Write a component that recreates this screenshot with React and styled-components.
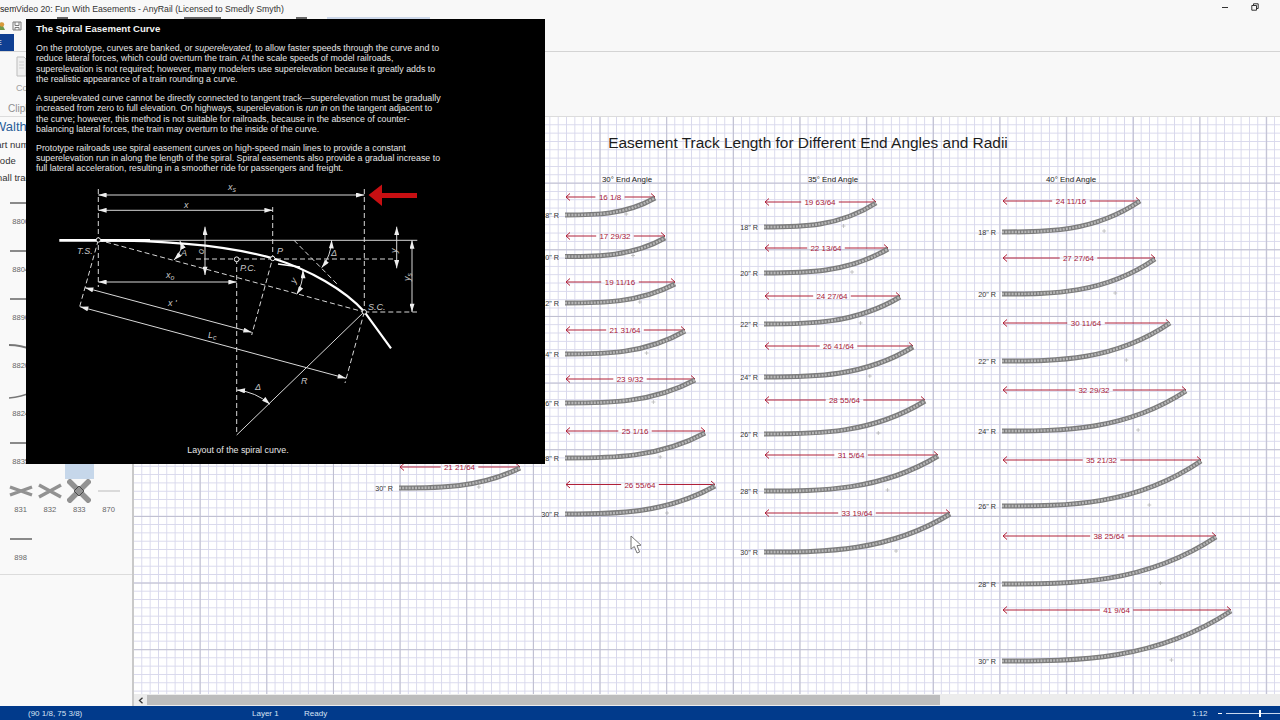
import React from "react";
import styled, { createGlobalStyle } from "styled-components";

const Global = createGlobalStyle`
  html, body { margin: 0; padding: 0; background: #f8f8f8; overflow: hidden; }
  body { font-family: "Liberation Sans", Arial, sans-serif; }
`;

const Page = styled.div`
  position: relative;
  width: 1280px;
  height: 720px;
  display: flex;
  flex-direction: column;
  overflow: hidden;
  background: #f8f8f8;
`;

/* ---------- title bar and ribbon ---------- */

const TitleBar = styled.div`
  height: 17px;
  display: flex;
  align-items: center;
  font-family: "Liberation Sans", Arial, sans-serif;
  font-size: 8.7px;
  color: #333;
  white-space: nowrap;
`;

const TabName = styled.span`
  width: 16px;
  overflow: hidden;
  color: #222;
`;

const WindowTitle = styled.span`
  flex: 1;
`;

const WindowButton = styled.svg`
  width: 8px;
  height: 8px;
  margin-right: ${p => p.$mr}px;
  margin-top: -3px;
`;

const QuickRow = styled.div`
  height: 17px;
  position: relative;
  display: flex;
  align-items: flex-start;
`;

const QuickIcon = styled.svg`
  width: 10px;
  height: 10px;
  margin: 4px 0 0 ${p => p.$ml}px;
  flex: none;
`;

const Hint = styled.div`
  height: ${p => (p.$light ? 3 : 2)}px;
  width: ${p => p.$w}px;
  margin-left: ${p => p.$ml}px;
  background: ${p => (p.$light ? "#ccd7e9" : "#666")};
  flex: none;
`;

const TabRow = styled.div`
  height: 18px;
  box-sizing: border-box;
  border-bottom: 1px solid #d4d4d4;
  display: flex;
`;

const FileTab = styled.div`
  width: 14px;
  height: 17px;
  background: #0f3f92;
  color: #fff;
  font-size: 8px;
  line-height: 17px;
  text-indent: -15px;
  overflow: hidden;
  white-space: nowrap;
`;

const RibbonBody = styled.div`
  height: 65px;
  box-sizing: border-box;
  border-bottom: 1px solid #dcdcdc;
  position: relative;
  display: flex;
  flex-direction: column;
  padding: 4px 0 0 16px;
  font-size: 9px;
  color: #a0a0a0;
  overflow: hidden;
`;

const CopyGlyph = styled.svg`
  width: 11px;
  height: 21px;
`;

const RibbonCaption = styled.div`
  margin-top: 6px;
  line-height: 11px;
`;

const GroupName = styled.div`
  margin: 9px 0 0 -8px;
  line-height: 12px;
  font-size: 10px;
  color: #8f8f8f;
`;

/* ---------- side panel ---------- */

const Body = styled.div`
  flex: 1;
  display: flex;
  min-height: 0;
`;

const Side = styled.aside`
  width: 132px;
  flex: none;
  box-sizing: content-box;
  border-right: 2px solid #c9c9c9;
  background: #f9f9f9;
  overflow: hidden;
  white-space: nowrap;
`;

const SideTitle = styled.div`
  height: 19px;
  line-height: 19px;
  font-size: 13px;
  color: #2c5f99;
  text-indent: -6px;
`;

const SideRow = styled.div`
  height: ${p => p.$h}px;
  line-height: ${p => p.$h}px;
  font-size: 9.5px;
  color: #333;
  text-indent: ${p => p.$indent}px;
`;

const Palette = styled.div`
  margin-top: 3px;
  height: 384px;
  box-sizing: border-box;
  border-bottom: 1px solid #dcdcdc;
  padding-left: 6px;
  display: grid;
  grid-template-columns: repeat(4, 29.3px);
  grid-auto-rows: 48px;
`;

const Cell = styled.div`
  display: flex;
  flex-direction: column;
  align-items: center;
  background: ${p => (p.$selected ? "#c6d7ea" : "transparent")};
`;

const CellGlyph = styled.svg`
  width: 24px;
  height: 24px;
  flex: none;
`;

const CellLabel = styled.span`
  font-size: 7.6px;
  line-height: 12px;
  margin-top: 1px;
  color: #666;
`;

/* ---------- drawing area ---------- */

const Work = styled.div`
  flex: 1;
  display: flex;
  flex-direction: column;
  min-width: 0;
`;

const Canvas = styled.div`
  flex: 1;
  min-height: 0;
  background-color: #fff;
  background-image:
    linear-gradient(to right, #bfbfd0 1px, transparent 1px),
    linear-gradient(to bottom, #bfbfd0 1px, transparent 1px),
    linear-gradient(to right, #d8d8ec 1px, transparent 1px),
    linear-gradient(to bottom, #d8d8ec 1px, transparent 1px);
  background-size: 66.67px 66.67px, 66.67px 66.67px, 8.333px 8.333px, 8.333px 8.333px;
  background-position: -1px -1px;
`;

const Sheet = styled.svg`
  display: block;
  width: 100%;
  height: 100%;
  font-family: "Liberation Sans", Arial, sans-serif;
`;

const SheetTitle = styled.text`
  font-size: 15.45px;
  fill: #1c1c1c;
  text-anchor: middle;
`;

const ColumnHead = styled.text`
  font-size: 7.9px;
  fill: #222;
  text-anchor: middle;
`;

const RadiusLabel = styled.text`
  font-size: 7.2px;
  fill: #333;
  text-anchor: end;
`;

const DimLabel = styled.text`
  font-size: 8px;
  fill: #a8203a;
  text-anchor: middle;
`;

const DimLine = styled.path`
  fill: none;
  stroke: #b02038;
  stroke-width: 1;
`;

const Bed = styled.path`
  fill: none;
  stroke: #7c7c7c;
  stroke-width: 5;
`;

const Rails = styled.path`
  fill: none;
  stroke: #b6b6b6;
  stroke-width: 2.4;
  stroke-dasharray: 2 1.2;
`;

const CentreMark = styled.path`
  fill: none;
  stroke: #b0b0b0;
  stroke-width: 0.7;
`;

const Scrollbar = styled.div`
  height: 12px;
  flex: none;
  display: flex;
  align-items: center;
  background: #ececec;
`;

const ScrollArrow = styled.svg`
  width: 6px;
  height: 7px;
  margin: 0 3px 0 4px;
  flex: none;
`;

const ScrollThumb = styled.div`
  width: 793px;
  height: 10px;
  background: #bdbdbd;
`;

const StatusBar = styled.footer`
  height: 14px;
  flex: none;
  display: flex;
  align-items: center;
  background: #013a8b;
  color: #d6e2f4;
  font-size: 8px;
  white-space: nowrap;
`;

const StatusItem = styled.span`
  width: ${p => p.$w}px;
  padding-left: ${p => p.$pl || 0}px;
  box-sizing: border-box;
  flex: none;
`;

const Zoomer = styled.div`
  flex: 1;
  height: 7px;
  position: relative;
  display: flex;
  align-items: center;
`;

const ZoomMinus = styled.div`
  width: 4px;
  height: 1px;
  margin-right: 4px;
  background: #fff;
`;

const ZoomTrack = styled.div`
  flex: 1;
  height: 1px;
  background: #c9d8ee;
`;

const ZoomThumb = styled.div`
  position: absolute;
  left: 41px;
  top: 0;
  width: 2px;
  height: 7px;
  background: #fff;
`;

/* ---------- black slide on top ---------- */

const Slide = styled.section`
  position: absolute;
  left: 26px;
  top: 19px;
  width: 519px;
  height: 445px;
  box-sizing: border-box;
  background: #000;
  color: #e6e6e6;
  padding: 4px 0 0 10px;
  display: flex;
  flex-direction: column;
  white-space: nowrap;
`;

const SlideTitle = styled.h2`
  margin: 0 0 8px;
  font-size: 9.6px;
  line-height: 12px;
  font-weight: bold;
  color: #f2f2f2;
`;

const SlideText = styled.p`
  margin: 0 0 8.2px;
  font-size: 8.86px;
  line-height: 10.4px;
  &:last-of-type {
    margin-bottom: 1.2px;
  }
`;

const Diagram = styled.svg`
  display: block;
  margin-left: -10px;
  width: 519px;
  height: 265px;
  flex: none;
  font-family: "Liberation Sans", Arial, sans-serif;
`;

const Caption = styled.div`
  width: 404px;
  text-align: center;
  font-size: 8.86px;
  margin-top: 5px;
  line-height: 11px;
`;

const Thin = styled.path`
  fill: none;
  stroke: #d8d8d8;
  stroke-width: 1;
`;

const Dashed = styled(Thin)`
  stroke-dasharray: 5 3;
`;

const Heavy = styled.path`
  fill: none;
  stroke: #fff;
  stroke-width: ${p => p.$w || 2.4}px;
`;

const Node = styled.circle`
  fill: #000;
  stroke: #eee;
  stroke-width: 1;
`;

const Mark = styled.text`
  font-size: ${p => p.$size || 9}px;
  font-style: italic;
  fill: #c8c8c8;
`;

const columns = [
  {
    head: null,
    x0: 399,
    ratio: 0.66,
    rows: [[30, 467, "21 21/64", 520, 488, 468]],
  },
  {
    head: "30° End Angle",
    headX: 627,
    x0: 565,
    ratio: 0.68,
    rows: [
      [18, 197, "16 1/8", 655, 215, 198],
      [20, 236, "17 29/32", 665, 256.5, 238],
      [22, 282, "19 11/16", 675, 303, 284],
      [24, 330, "21 31/64", 685, 354, 331],
      [26, 379, "23 9/32", 695, 403, 380],
      [28, 431, "25 1/16", 705, 458, 433],
      [30, 484.5, "26 55/64", 715, 514, 486],
    ],
  },
  {
    head: "35° End Angle",
    headX: 833,
    x0: 764,
    ratio: 0.71,
    rows: [
      [18, 202, "19 63/64", 876, 227, 203],
      [20, 248, "22 13/64", 888, 273, 249],
      [22, 296, "24 27/64", 900, 324, 297],
      [24, 346, "26 41/64", 913, 377, 347],
      [26, 400, "28 55/64", 925, 434, 401],
      [28, 455, "31 5/64", 938, 491, 456],
      [30, 513, "33 19/64", 950, 552, 514],
    ],
  },
  {
    head: "40° End Angle",
    headX: 1071,
    x0: 1002,
    ratio: 0.74,
    rows: [
      [18, 201, "24 11/16", 1140, 232, 201],
      [20, 258, "27 27/64", 1155, 294, 259],
      [22, 323, "30 11/64", 1170, 361, 323],
      [24, 390, "32 29/32", 1186, 431, 391],
      [26, 460, "35 21/32", 1201, 506, 461],
      [28, 536, "38 25/64", 1216, 584, 537],
      [30, 610, "41 9/64", 1231, 661, 611],
    ],
  },
];

const paletteRows = [
  [["8800", "straight"], ["8801", "straight"], ["8802", "straight"], ["8803", "straight"]],
  [["8804", "straight"], ["8805", "straight"], ["8806", "straight"], ["8807", "straight"]],
  [["8890", "straight"], ["8891", "straight"], ["8892", "straight"], ["8893", "straight"]],
  [["8820", "down"], ["8821", "down"], ["8822", "down"], ["8823", "down"]],
  [["8824", "up"], ["8825", "up"], ["8826", "up"], ["8827", "up"]],
  [["8835", "straight"], ["8836", "straight"], ["846", "cross", true], ["826", "thin"]],
  [["831", "flat"], ["832", "wide"], ["833", "cross"], ["870", "thin"]],
  [["898", "straight"]],
];

const PaletteGlyph = ({ kind }) => {
  if (kind === "down") {
    return (
      <CellGlyph viewBox="0 0 24 24">
        <path d="M0 10 Q12 10 24 15" fill="none" stroke="#777" strokeWidth="1.8" />
      </CellGlyph>
    );
  }
  if (kind === "up") {
    return (
      <CellGlyph viewBox="0 0 24 24">
        <path d="M0 15 Q12 14 24 9" fill="none" stroke="#777" strokeWidth="1.6" />
      </CellGlyph>
    );
  }
  if (kind === "thin") {
    return (
      <CellGlyph viewBox="0 0 24 24">
        <path d="M1 12H23" stroke="#bbb" strokeWidth="1" />
      </CellGlyph>
    );
  }
  if (kind === "flat" || kind === "wide" || kind === "cross") {
    const dy = kind === "flat" ? 4 : kind === "wide" ? 6 : 11;
    const w = kind === "cross" ? 5.5 : 3.4;
    return (
      <CellGlyph viewBox="0 0 24 24">
        <path
          d={`M1 ${12 - dy}L23 ${12 + dy}M1 ${12 + dy}L23 ${12 - dy}`}
          stroke="#929292"
          strokeWidth={w}
        />
        {kind === "cross" && <path d="M12 7L17 12L12 17L7 12Z" fill="none" stroke="#333" strokeWidth="0.8" />}
      </CellGlyph>
    );
  }
  return (
    <CellGlyph viewBox="0 0 24 24">
      <path d="M1 12H23" stroke="#8a8a8a" strokeWidth="2" />
    </CellGlyph>
  );
};

const TrackFigure = ({ x0, ratio, row }) => {
  const [radius, dimY, label, x1, y0, y1] = row;
  const w = x1 - x0;
  const curve = `M${x0} ${y0}C${x0 + w / 3} ${y0} ${x0 + (2 * w) / 3} ${y0} ${x1} ${y1}`;
  const mid = (x0 + x1) / 2;
  const gap = label.length * 2.1 + 2;
  const cx = x0 + w * ratio;
  return (
    <g>
      <RadiusLabel x={x0 - 6} y={y0 + 3}>{`${radius}" R`}</RadiusLabel>
      <DimLine
        d={`M${x0 + 5} ${dimY - 3.5}L${x0 + 1} ${dimY}L${x0 + 5} ${dimY + 3.5}M${x0 + 1} ${dimY}H${mid - gap}M${mid + gap} ${dimY}H${x1}M${x1 - 4} ${dimY - 3.5}L${x1} ${dimY}L${x1 - 4} ${dimY + 3.5}`}
      />
      <DimLabel x={mid} y={dimY + 3}>{label}</DimLabel>
      <Bed d={curve} />
      <Rails d={curve} />
      <CentreMark d={`M${cx - 2} ${y0 - 1}H${cx + 2}M${cx} ${y0 - 3}V${y0 + 1}`} />
    </g>
  );
};

const SpiralDiagram = () => (
  <Diagram viewBox="26 175 519 265">
    <defs>
      <marker id="tip" viewBox="0 0 10 6" refX="10" refY="3" markerWidth="9" markerHeight="5" orient="auto-start-reverse" markerUnits="userSpaceOnUse">
        <path d="M0 0L10 3L0 6Z" fill="#eee" />
      </marker>
    </defs>

    <Dashed d="M98.3 189V287M364.3 189V312M272.7 207V258L251.7 335" />
    <Dashed d="M98.3 240L364.3 312M196 259H393M364.3 312H417M294 240.3L338 285" />
    <Dashed d="M98.3 240L79.3 308M364.3 312L345 383M236.7 259V435" />

    <Thin d="M98.3 195H364.3" markerStart="url(#tip)" markerEnd="url(#tip)" />
    <Thin d="M98.3 210.3H272.7" markerStart="url(#tip)" markerEnd="url(#tip)" />
    <Thin d="M98.3 282H236.7" markerStart="url(#tip)" markerEnd="url(#tip)" />
    <Thin d="M85 287.7L251.7 332.3" markerStart="url(#tip)" markerEnd="url(#tip)" />
    <Thin d="M80 306.7L346 378.3" markerStart="url(#tip)" markerEnd="url(#tip)" />
    <Thin d="M205 226.7V275" markerStart="url(#tip)" markerEnd="url(#tip)" />
    <Thin d="M396.7 226.7V268.3" markerStart="url(#tip)" markerEnd="url(#tip)" />
    <Thin d="M412 240.3V312" markerStart="url(#tip)" markerEnd="url(#tip)" />
    <Thin d="M150 240.3H417.3M364.3 311.7L236.7 435" />

    <Thin d="M180 241Q184 250 174 260" markerStart="url(#tip)" markerEnd="url(#tip)" />
    <Thin d="M331.7 240Q331 256 321.7 267.7" markerStart="url(#tip)" markerEnd="url(#tip)" />
    <Thin d="M303 270Q303 284 296.7 294.3" markerStart="url(#tip)" markerEnd="url(#tip)" />
    <Thin d="M236.7 390Q256 392 270 404.3" markerStart="url(#tip)" markerEnd="url(#tip)" />

    <Heavy d="M59.3 240.3H150" $w={2.8} />
    <Heavy d="M98 240.3C170 240.3 230 246 272.7 258.3C310 270 345 290 364.3 311.7L391 348.3" $w={2.2} />
    <Heavy d="M278 264L300 267" $w={1.4} />

    <Node cx="98.3" cy="240" r="2.2" />
    <Node cx="272.7" cy="258.5" r="2.2" />
    <Node cx="236.7" cy="259.3" r="2.4" />
    <Node cx="364.3" cy="312" r="2.2" />

    <path d="M417 193H382V184.5L368.5 195L382 206V198H417Z" fill="#c70f12" />

    <Mark x="228" y="190">x<tspan dy="2" fontSize="7">s</tspan></Mark>
    <Mark x="184" y="208">x</Mark>
    <Mark x="77" y="254">T.S.</Mark>
    <Mark x="181" y="256">A</Mark>
    <Mark x="277" y="254">P</Mark>
    <Mark x="240" y="271">P.C.</Mark>
    <Mark x="331" y="256">Δ</Mark>
    <Mark x="368" y="310">S.C.</Mark>
    <Mark x="166" y="278">x<tspan dy="2" fontSize="7">o</tspan></Mark>
    <Mark x="168" y="306">x '</Mark>
    <Mark x="208" y="338">L<tspan dy="2" fontSize="7">c</tspan></Mark>
    <Mark x="301" y="384">R</Mark>
    <Mark x="255" y="390">Δ</Mark>
    <Mark x="291" y="283" transform="rotate(-60 294 280)">y</Mark>
    <Mark x="0" y="0" transform="translate(204 254) rotate(-90)">o</Mark>
    <Mark x="0" y="0" transform="translate(397 253) rotate(-90)">y</Mark>
    <Mark x="0" y="0" transform="translate(410 281) rotate(-90)">y<tspan dy="2" fontSize="7">s</tspan></Mark>
  </Diagram>
);

const App = () => (
  <Page>
    <Global />
    <TitleBar>
      <TabName>sem</TabName>
      <WindowTitle>Video 20: Fun With Easements - AnyRail (Licensed to Smedly Smyth)</WindowTitle>
      <WindowButton viewBox="0 0 8 8" $mr={22}>
        <path d="M1 4.5H7" stroke="#333" strokeWidth="1" />
      </WindowButton>
      <WindowButton viewBox="0 0 8 8" $mr={21}>
        <path d="M2.5 2.5V.8H7.2V5.5H5.5M.8 2.5H5.5V7.2H.8Z" fill="none" stroke="#333" strokeWidth="1" />
      </WindowButton>
    </TitleBar>
    <QuickRow>
      <QuickIcon viewBox="0 0 10 10" $ml={-4}>
        <path d="M1 9L5 1L9 9Z" fill="#6f9a4a" />
        <circle cx="6" cy="3.5" r="2.2" fill="#d99a3b" />
      </QuickIcon>
      <QuickIcon viewBox="0 0 10 10" $ml={6}>
        <path d="M1 1H9V9H1ZM3 1V4.5H7V1M3 9V6.5H7V9" fill="none" stroke="#7a7a7a" strokeWidth="1" />
      </QuickIcon>
      <Hint $ml={35} $w={11} />
      <Hint $ml={116} $w={37} />
      <Hint $ml={75} $w={11} />
      <Hint $ml={20} $w={103} $light />
    </QuickRow>
    <TabRow>
      <FileTab>FILE</FileTab>
    </TabRow>
    <RibbonBody>
      <CopyGlyph viewBox="0 0 11 21">
        <path d="M1 1H8L10 3V20H1Z" fill="#efefef" stroke="#bdbdbd" />
        <path d="M3 6H8M3 9H8M3 12H8" stroke="#cfcfcf" />
      </CopyGlyph>
      <RibbonCaption>Copy</RibbonCaption>
      <GroupName>Clipboard</GroupName>
    </RibbonBody>
    <Body>
      <Side>
        <SideTitle>Walthers Code 83</SideTitle>
        <SideRow $h={17} $indent={-10}>Part number</SideRow>
        <SideRow $h={15} $indent={-7}>Code</SideRow>
        <SideRow $h={20} $indent={-12}>Small track</SideRow>
        <Palette>
          {paletteRows.flat().map(([label, kind, selected]) => (
            <Cell key={label} $selected={selected}>
              <PaletteGlyph kind={kind} />
              <CellLabel>{label}</CellLabel>
            </Cell>
          ))}
        </Palette>
      </Side>
      <Work>
        <Canvas>
          <Sheet viewBox="134 117 1146 577">
            <SheetTitle x="808" y="148">Easement Track Length for Different End Angles and Radii</SheetTitle>
            {columns.map(col => (
              <g key={col.x0}>
                {col.head && <ColumnHead x={col.headX} y="182">{col.head}</ColumnHead>}
                {col.rows.map(row => (
                  <TrackFigure key={row[0]} x0={col.x0} ratio={col.ratio} row={row} />
                ))}
              </g>
            ))}
            <path
              d="M631 536V549L634.3 546.5L637 553L639.6 552L637 545.6L641 545.2Z"
              fill="#fff"
              stroke="#777"
              strokeWidth="1"
            />
          </Sheet>
        </Canvas>
        <Scrollbar>
          <ScrollArrow viewBox="0 0 6 7">
            <path d="M4.5 .8L1.5 3.5L4.5 6.2" fill="none" stroke="#333" strokeWidth="1.3" />
          </ScrollArrow>
          <ScrollThumb />
        </Scrollbar>
      </Work>
    </Body>
    <StatusBar>
      <StatusItem $w={252} $pl={28}>(90 1/8, 75 3/8)</StatusItem>
      <StatusItem $w={52}>Layer 1</StatusItem>
      <StatusItem $w={888}>Ready</StatusItem>
      <StatusItem $w={26}>1:12</StatusItem>
      <Zoomer>
        <ZoomMinus />
        <ZoomTrack />
        <ZoomThumb />
      </Zoomer>
    </StatusBar>
    <Slide>
      <SlideTitle>The Spiral Easement Curve</SlideTitle>
      <SlideText>
        On the prototype, curves are banked, or <em>superelevated</em>, to allow faster speeds through the curve and to
        <br />
        reduce lateral forces, which could overturn the train. At the scale speeds of model railroads,
        <br />
        superelevation is not required; however, many modelers use superelevation because it greatly adds to
        <br />
        the realistic appearance of a train rounding a curve.
      </SlideText>
      <SlideText>
        A superelevated curve cannot be directly connected to tangent track—superelevation must be gradually
        <br />
        increased from zero to full elevation. On highways, superelevation is <em>run in</em> on the tangent adjacent to
        <br />
        the curve; however, this method is not suitable for railroads, because in the absence of counter-
        <br />
        balancing lateral forces, the train may overturn to the inside of the curve.
      </SlideText>
      <SlideText>
        Prototype railroads use spiral easement curves on high-speed main lines to provide a constant
        <br />
        superelevation run in along the length of the spiral. Spiral easements also provide a gradual increase to
        <br />
        full lateral acceleration, resulting in a smoother ride for passengers and freight.
      </SlideText>
      <SpiralDiagram />
      <Caption>Layout of the spiral curve.</Caption>
    </Slide>
  </Page>
);

export default App;
